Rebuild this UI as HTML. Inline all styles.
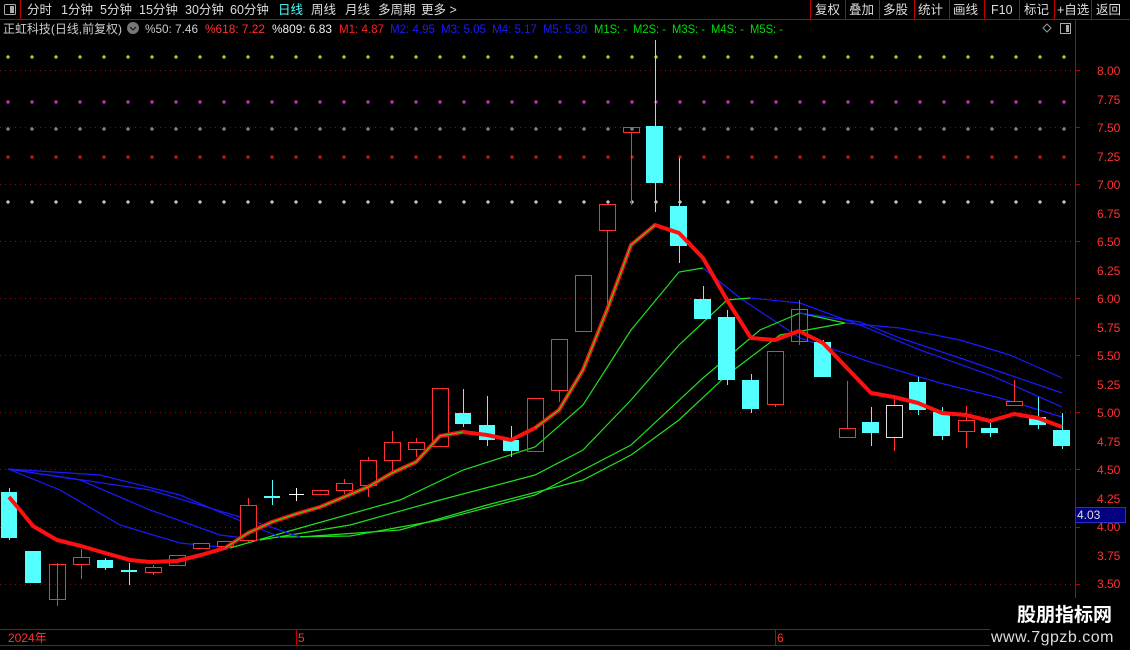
<!DOCTYPE html>
<html><head><meta charset="utf-8"><style>
html,body{margin:0;padding:0;background:#000;width:1130px;height:650px;overflow:hidden}
svg{display:block}
text{font-family:"Liberation Sans","Noto Sans CJK SC",sans-serif}
</style></head><body>
<svg width="1130" height="650" viewBox="0 0 1130 650" xmlns="http://www.w3.org/2000/svg">
<rect width="1130" height="650" fill="#000"/>
<!-- top bar -->
<line x1="0" y1="19.5" x2="1130" y2="19.5" stroke="#c00000"/>
<line x1="20.5" y1="0" x2="20.5" y2="19" stroke="#c00000"/>
<rect x="4.5" y="4.5" width="11" height="10" fill="none" stroke="#aaa" rx="1"/><rect x="10" y="6" width="4" height="7" fill="#aaa"/>
<g font-size="12.5" fill="#ddd">
<text x="27" y="14">分时</text><text x="61" y="14">1分钟</text><text x="100" y="14">5分钟</text><text x="139" y="14">15分钟</text><text x="185" y="14">30分钟</text><text x="230" y="14">60分钟</text><text x="278" y="14" fill="#54ffff">日线</text><text x="311" y="14">周线</text><text x="345" y="14">月线</text><text x="378" y="14">多周期</text><text x="421" y="14">更多 &gt;</text>
<text x="815" y="14">复权</text><text x="849" y="14">叠加</text><text x="883" y="14">多股</text><text x="918" y="14">统计</text><text x="953" y="14">画线</text><text x="991" y="14">F10</text><text x="1024" y="14">标记</text><text x="1057" y="14">+自选</text><text x="1096" y="14">返回</text>
</g>
<g stroke="#c00000"><line x1="810.5" y1="0" x2="810.5" y2="19"/><line x1="845.5" y1="0" x2="845.5" y2="19"/><line x1="879.5" y1="0" x2="879.5" y2="19"/><line x1="914.5" y1="0" x2="914.5" y2="19"/><line x1="949.5" y1="0" x2="949.5" y2="19"/><line x1="984.5" y1="0" x2="984.5" y2="19"/><line x1="1019.5" y1="0" x2="1019.5" y2="19"/><line x1="1054.5" y1="0" x2="1054.5" y2="19"/><line x1="1091.5" y1="0" x2="1091.5" y2="19"/></g>
<!-- info row -->
<g font-size="12">
<text x="3" y="33" fill="#ccc" textLength="119" lengthAdjust="spacingAndGlyphs">正虹科技(日线,前复权)</text>
<circle cx="133" cy="28" r="6" fill="#777"/><path d="M130 27 l3 3 l3 -3" stroke="#222" fill="none" stroke-width="1.3"/>
<text x="145" y="33" fill="#ccc" textLength="53" lengthAdjust="spacingAndGlyphs">%50: 7.46</text>
<text x="205" y="33" fill="#ff3232" textLength="60" lengthAdjust="spacingAndGlyphs">%618: 7.22</text>
<text x="272" y="33" fill="#eee" textLength="60" lengthAdjust="spacingAndGlyphs">%809: 6.83</text>
<text x="339" y="33" fill="#ff2020" textLength="45" lengthAdjust="spacingAndGlyphs">M1: 4.87</text>
<text x="390" y="33" fill="#1a1aff" textLength="45" lengthAdjust="spacingAndGlyphs">M2: 4.95</text>
<text x="441" y="33" fill="#1a1aff" textLength="45" lengthAdjust="spacingAndGlyphs">M3: 5.05</text>
<text x="492" y="33" fill="#1a1aff" textLength="45" lengthAdjust="spacingAndGlyphs">M4: 5.17</text>
<text x="543" y="33" fill="#1a1aff" textLength="44" lengthAdjust="spacingAndGlyphs">M5: 5.30</text>
<text x="594" y="33" fill="#00e000" textLength="33" lengthAdjust="spacingAndGlyphs">M1S: -</text>
<text x="633" y="33" fill="#00e000" textLength="33" lengthAdjust="spacingAndGlyphs">M2S: -</text>
<text x="672" y="33" fill="#00e000" textLength="33" lengthAdjust="spacingAndGlyphs">M3S: -</text>
<text x="711" y="33" fill="#00e000" textLength="33" lengthAdjust="spacingAndGlyphs">M4S: -</text>
<text x="750" y="33" fill="#00e000" textLength="33" lengthAdjust="spacingAndGlyphs">M5S: -</text>
</g>
<path d="M1047 24 l4 4 l-4 4 l-4 -4z" fill="none" stroke="#999"/>
<rect x="1060.5" y="23.5" width="10" height="10" fill="none" stroke="#aaa"/><rect x="1066" y="25" width="3" height="7" fill="#aaa"/>
<line x1="1075.5" y1="20" x2="1075.5" y2="630" stroke="#c00000"/>
<!-- grid dotted -->
<g stroke="#8a1010" stroke-dasharray="1 4">
<line x1="0" y1="70.5" x2="1075" y2="70.5"/><line x1="0" y1="127.5" x2="1075" y2="127.5"/><line x1="0" y1="184.5" x2="1075" y2="184.5"/><line x1="0" y1="241.5" x2="1075" y2="241.5"/><line x1="0" y1="298.5" x2="1075" y2="298.5"/><line x1="0" y1="355.5" x2="1075" y2="355.5"/><line x1="0" y1="412.5" x2="1075" y2="412.5"/><line x1="0" y1="469.5" x2="1075" y2="469.5"/><line x1="0" y1="527.5" x2="1075" y2="527.5"/><line x1="0" y1="584.5" x2="1075" y2="584.5"/>
</g>
<!-- axis -->
<g font-size="12" fill="#ff3232">
<text x="1097" y="75">8.00</text><text x="1097" y="104">7.75</text><text x="1097" y="132">7.50</text><text x="1097" y="161">7.25</text><text x="1097" y="189">7.00</text><text x="1097" y="218">6.75</text><text x="1097" y="246">6.50</text><text x="1097" y="275">6.25</text><text x="1097" y="303">6.00</text><text x="1097" y="332">5.75</text><text x="1097" y="360">5.50</text><text x="1097" y="389">5.25</text><text x="1097" y="417">5.00</text><text x="1097" y="446">4.75</text><text x="1097" y="474">4.50</text><text x="1097" y="503">4.25</text><text x="1097" y="531">4.00</text><text x="1097" y="560">3.75</text><text x="1097" y="588">3.50</text>
</g>
<g stroke="#c00000"><line x1="1075" y1="70.5" x2="1080" y2="70.5"/><line x1="1075" y1="127.5" x2="1080" y2="127.5"/><line x1="1075" y1="184.5" x2="1080" y2="184.5"/><line x1="1075" y1="241.5" x2="1080" y2="241.5"/><line x1="1075" y1="298.5" x2="1080" y2="298.5"/><line x1="1075" y1="355.5" x2="1080" y2="355.5"/><line x1="1075" y1="412.5" x2="1080" y2="412.5"/><line x1="1075" y1="469.5" x2="1080" y2="469.5"/><line x1="1075" y1="527.5" x2="1080" y2="527.5"/><line x1="1075" y1="584.5" x2="1080" y2="584.5"/></g>
<rect x="1075.5" y="507.5" width="50" height="15" fill="#000080" stroke="#3030c0"/>
<text x="1077" y="519" font-size="12" fill="#ddd">4.03</text>
<!-- plus dots -->
<defs>
<pattern id="py" x="4" y="54" width="24" height="6" patternUnits="userSpaceOnUse"><path d="M4 1v4M2 3h4" stroke="#ffff40"/></pattern>
<pattern id="pm" x="4" y="99" width="24" height="6" patternUnits="userSpaceOnUse"><path d="M4 1v4M2 3h4" stroke="#ff40ff"/></pattern>
<pattern id="pg" x="4" y="126" width="24" height="6" patternUnits="userSpaceOnUse"><path d="M4 1v4M2 3h4" stroke="#b0b0b0"/></pattern>
<pattern id="pr" x="4" y="154" width="24" height="6" patternUnits="userSpaceOnUse"><path d="M4 1v4M2 3h4" stroke="#ff2020"/></pattern>
<pattern id="pw" x="4" y="199" width="24" height="6" patternUnits="userSpaceOnUse"><path d="M4 1v4M2 3h4" stroke="#ffffff"/></pattern>
</defs>
<rect x="4" y="54" width="1066" height="6" fill="url(#py)"/>
<rect x="4" y="99" width="1066" height="6" fill="url(#pm)"/>
<rect x="4" y="126" width="1066" height="6" fill="url(#pg)"/>
<rect x="4" y="154" width="1066" height="6" fill="url(#pr)"/>
<rect x="4" y="199" width="1066" height="6" fill="url(#pw)"/>
<!-- MA lines -->
<g fill="none" stroke-width="1.2">
<polyline stroke="#1a1aff" points="8,469 60,490 120,525 180,543 230,548"/>
<polyline stroke="#20e020" points="230,548 300,528 400,500 463,470 535,447 583,405 631,330 679,272 703,268"/>
<polyline stroke="#1a1aff" points="703,268 740,298 800,338 870,362 940,383 1000,398 1062,417"/>
<polyline stroke="#1a1aff" points="8,469 80,480 150,510 220,535 260,540"/>
<polyline stroke="#20e020" points="260,540 350,525 440,500 535,475 583,450 631,400 679,345 727,300 750,298"/>
<polyline stroke="#1a1aff" points="750,298 800,303 860,325 920,350 990,375 1062,407"/>
<polyline stroke="#1a1aff" points="8,469 100,475 180,495 250,525 280,537"/>
<polyline stroke="#20e020" points="280,537 350,536 440,520 535,495 631,445 703,378 760,330 800,313 845,323"/>
<polyline stroke="#1a1aff" points="800,313 860,322 900,338 960,358 1062,393"/>
<polyline stroke="#1a1aff" points="8,469 150,490 250,520 300,537"/>
<polyline stroke="#20e020" points="300,537 400,530 487,505 583,480 631,455 679,420 727,375 780,335 845,323"/>
<polyline stroke="#1a1aff" points="845,323 900,328 960,340 1010,355 1062,378"/>
</g>
<!-- candles -->
<g stroke="#ff3232" fill="none">
<line x1="57.5" y1="563" x2="57.5" y2="606"/><rect x="49.5" y="564.5" width="16" height="35"/>
<line x1="81.5" y1="549" x2="81.5" y2="579"/><rect x="73.5" y="557.5" width="16" height="7" fill="#000"/>
<line x1="153.5" y1="565" x2="153.5" y2="575"/><rect x="145.5" y="567.5" width="16" height="5" fill="#000"/>
<rect x="169.5" y="555.5" width="16" height="10" fill="#000"/>
<rect x="193.5" y="543.5" width="16" height="5" fill="#000"/>
<rect x="217.5" y="541.5" width="16" height="5" fill="#000"/>
<line x1="248.5" y1="498" x2="248.5" y2="542"/><rect x="240.5" y="505.5" width="16" height="35" fill="#000"/>
<rect x="312.5" y="490.5" width="16" height="4" fill="#000"/>
<line x1="344.5" y1="479" x2="344.5" y2="494"/><rect x="336.5" y="483.5" width="16" height="7" fill="#000"/>
<line x1="368.5" y1="457" x2="368.5" y2="497"/><rect x="360.5" y="460.5" width="16" height="25" fill="#000"/>
<line x1="392.5" y1="431" x2="392.5" y2="475"/><rect x="384.5" y="442.5" width="16" height="18" fill="#000"/>
<line x1="416.5" y1="438" x2="416.5" y2="457"/><rect x="408.5" y="442.5" width="16" height="7" fill="#000"/>
<rect x="432.5" y="388.5" width="16" height="58" fill="#000"/>
<rect x="527.5" y="398.5" width="16" height="53"/>
<line x1="559.5" y1="390" x2="559.5" y2="402"/><rect x="551.5" y="339.5" width="16" height="51"/>
<rect x="575.5" y="275.5" width="16" height="56"/>
<line x1="607.5" y1="230" x2="607.5" y2="306"/><rect x="599.5" y="204.5" width="16" height="26"/>
<line x1="631.5" y1="132" x2="631.5" y2="205"/><rect x="623.5" y="127.5" width="16" height="5"/>
<line x1="775.5" y1="404" x2="775.5" y2="407"/><rect x="767.5" y="351.5" width="16" height="53"/>
<line x1="799.5" y1="300" x2="799.5" y2="345"/><rect x="791.5" y="309.5" width="16" height="32"/>
<line x1="847.5" y1="381" x2="847.5" y2="437"/><rect x="839.5" y="428.5" width="16" height="9" fill="#000"/>
<line x1="894.5" y1="398" x2="894.5" y2="451"/><rect x="886.5" y="405.5" width="16" height="32" fill="#000" stroke="#ddd"/>
<line x1="966.5" y1="406" x2="966.5" y2="448"/><rect x="958.5" y="420.5" width="16" height="11" fill="#000"/>
<line x1="1014.5" y1="380" x2="1014.5" y2="405"/><rect x="1006.5" y="401.5" width="16" height="4" fill="#000"/>
</g>
<g fill="#54ffff" stroke="#54ffff">
<line x1="9.5" y1="488" x2="9.5" y2="540"/><rect x="1" y="492" width="16" height="46" stroke="none"/>
<rect x="25" y="551" width="16" height="32" stroke="none"/>
<line x1="105.5" y1="558" x2="105.5" y2="570"/><rect x="97" y="560" width="16" height="8" stroke="none"/>
<line x1="129.5" y1="563" x2="129.5" y2="585"/><rect x="121" y="570" width="16" height="2" stroke="none"/>
<line x1="272.5" y1="480" x2="272.5" y2="505"/><rect x="264" y="496" width="16" height="2" stroke="none"/>
<line x1="463.5" y1="389" x2="463.5" y2="427"/><rect x="455" y="413" width="16" height="11" stroke="none"/>
<line x1="487.5" y1="396" x2="487.5" y2="446"/><rect x="479" y="425" width="16" height="15" stroke="none"/>
<line x1="511.5" y1="426" x2="511.5" y2="457"/><rect x="503" y="440" width="16" height="11" stroke="none"/>
<line x1="655.5" y1="40" x2="655.5" y2="212"/><rect x="646" y="126" width="17" height="57" stroke="none"/>
<line x1="679.5" y1="158" x2="679.5" y2="263"/><rect x="670" y="206" width="17" height="40" stroke="none"/>
<line x1="703.5" y1="286" x2="703.5" y2="319"/><rect x="694" y="299" width="17" height="20" stroke="none"/>
<line x1="727.5" y1="310" x2="727.5" y2="385"/><rect x="718" y="317" width="17" height="63" stroke="none"/>
<line x1="751.5" y1="374" x2="751.5" y2="413"/><rect x="742" y="380" width="17" height="29" stroke="none"/>
<line x1="823.5" y1="340" x2="823.5" y2="377"/><rect x="814" y="342" width="17" height="35" stroke="none"/>
<line x1="871.5" y1="407" x2="871.5" y2="446"/><rect x="862" y="422" width="17" height="11" stroke="none"/>
<line x1="918.5" y1="377" x2="918.5" y2="415"/><rect x="909" y="382" width="17" height="28" stroke="none"/>
<line x1="942.5" y1="407" x2="942.5" y2="440"/><rect x="933" y="412" width="17" height="24" stroke="none"/>
<line x1="990.5" y1="423" x2="990.5" y2="437"/><rect x="981" y="428" width="17" height="5" stroke="none"/>
<line x1="1038.5" y1="397" x2="1038.5" y2="429"/><rect x="1029" y="417" width="17" height="8" stroke="none"/>
<line x1="1062.5" y1="413" x2="1062.5" y2="449"/><rect x="1053" y="430" width="17" height="16" stroke="none"/>
</g>
<path d="M296.5 488v13M289 494.5h15" stroke="#fff"/>
<!-- thick red MA -->
<polyline fill="none" stroke="#ff1010" stroke-width="4" stroke-linejoin="round" points="9,497 20,510 33,526 57,540 81,546 105,553 130,560 150,562 177,561 201,555 225,548 248,533 272,522 296,514 320,507 344,497 368,487 392,473 416,462 440,436 463,432 487,435 511,440 535,428 559,410 583,370 607,310 631,245 655,225 679,233 703,258 727,300 751,338 775,340 799,331 823,343 847,368 871,393 894,397 918,403 942,413 966,415 990,421 1014,414 1038,418 1062,427"/>
<polyline fill="none" stroke="#20e020" stroke-width="1" points="225,548 248,533 272,522 296,514 320,507 344,497 368,487 392,473 416,462 440,436 463,432"/>
<polyline fill="none" stroke="#20e020" stroke-width="1" points="535,428 559,410 583,370 607,310 631,245 655,225"/>
<!-- bottom -->
<line x1="0" y1="629.5" x2="1075" y2="629.5" stroke="#c00000"/>
<line x1="0" y1="645.5" x2="1000" y2="645.5" stroke="#c00000"/>
<line x1="296.5" y1="630" x2="296.5" y2="645" stroke="#c00000"/>
<line x1="775.5" y1="630" x2="775.5" y2="645" stroke="#c00000"/>
<g font-size="12" fill="#ff3232"><text x="8" y="642">2024年</text><text x="298" y="642">5</text><text x="777" y="642">6</text></g>
<rect x="990" y="598" width="140" height="52" fill="#000"/>
<text x="1017" y="621" font-size="19" font-weight="bold" fill="#fff">股朋指标网</text>
<text x="991" y="642" font-size="16" fill="#ddd" letter-spacing="0.5">www.7gpzb.com</text>
</svg>
</body></html>
